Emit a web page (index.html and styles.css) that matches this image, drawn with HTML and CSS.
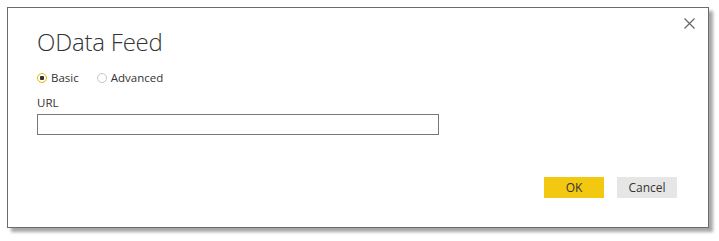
FILE: index.html
```html
<!DOCTYPE html>
<html lang="en">
<head>
    <meta charset="UTF-8">
    <title>OData Feed</title>
    <link rel="stylesheet" href="styles.css">
</head>
<body>
    <div class="dialog">
        <button class="close" title="Close">
            <svg width="11" height="11" viewBox="0 0 11 11">
                <path d="M0.5 0.5 L10.5 10.5 M10.5 0.5 L0.5 10.5" stroke="#666" stroke-width="1.2" fill="none"/>
            </svg>
        </button>
        <h1 class="title">OData Feed</h1>
        <div class="modes">
            <label class="mode">
                <input type="radio" name="mode" checked>
                <span class="dot"></span>
                Basic
            </label>
            <label class="mode">
                <input type="radio" name="mode">
                <span class="dot"></span>
                Advanced
            </label>
        </div>
        <label class="field-label" for="url">URL</label>
        <input class="url" id="url" type="text">
        <div class="actions">
            <button class="btn btn-ok">OK</button>
            <button class="btn btn-cancel">Cancel</button>
        </div>
    </div>
</body>
</html>
```

FILE: styles.css
```css
body {
    margin: 0;
    background: #fff;
    font-family: "Open Sans", "Noto Sans", sans-serif;
    color: #333;
}
.dialog {
    position: relative;
    box-sizing: border-box;
    width: 702px;
    height: 221px;
    margin: 7px;
    padding: 18px 31px 0 29px;
    border: 1px solid #6b6b6b;
    background: #fff;
    box-shadow: 4px 4px 3px rgba(0, 0, 0, 0.35);
}
.close {
    position: absolute;
    top: 8px;
    right: 11px;
    width: 15px;
    height: 15px;
    padding: 2px;
    border: 0;
    background: none;
}
.close svg {
    display: block;
}
.title {
    margin: 0;
    font-size: 24px;
    font-weight: 300;
    line-height: 32px;
    letter-spacing: -0.2px;
    color: #333;
}
.modes {
    display: flex;
    gap: 18px;
    margin-top: 12px;
    font-size: 11.5px;
    line-height: 16px;
}
.mode {
    display: flex;
    align-items: center;
    gap: 4px;
}
.mode input {
    display: none;
}
.dot {
    box-sizing: border-box;
    width: 10px;
    height: 10px;
    border: 1px solid #c6c6c6;
    border-radius: 50%;
    background: #fff;
}
.mode input:checked + .dot {
    border-color: #e6b800;
    background: radial-gradient(circle, #333 0 2px, #fff 2.5px);
}
.field-label {
    display: block;
    margin-top: 9px;
    font-size: 11.5px;
    line-height: 16px;
}
.url {
    display: block;
    box-sizing: border-box;
    width: 402px;
    height: 21px;
    margin: 3px 0 0;
    border: 1px solid #777;
    padding: 0 4px;
    font: inherit;
}
.actions {
    display: flex;
    justify-content: flex-end;
    gap: 13px;
    margin-top: 42px;
}
.btn {
    width: 60px;
    height: 21px;
    border: 0;
    padding: 0;
    font-family: inherit;
    font-size: 12px;
    color: #333;
}
.btn-ok {
    background: #f2c811;
}
.btn-cancel {
    background: #e6e6e6;
}
```
